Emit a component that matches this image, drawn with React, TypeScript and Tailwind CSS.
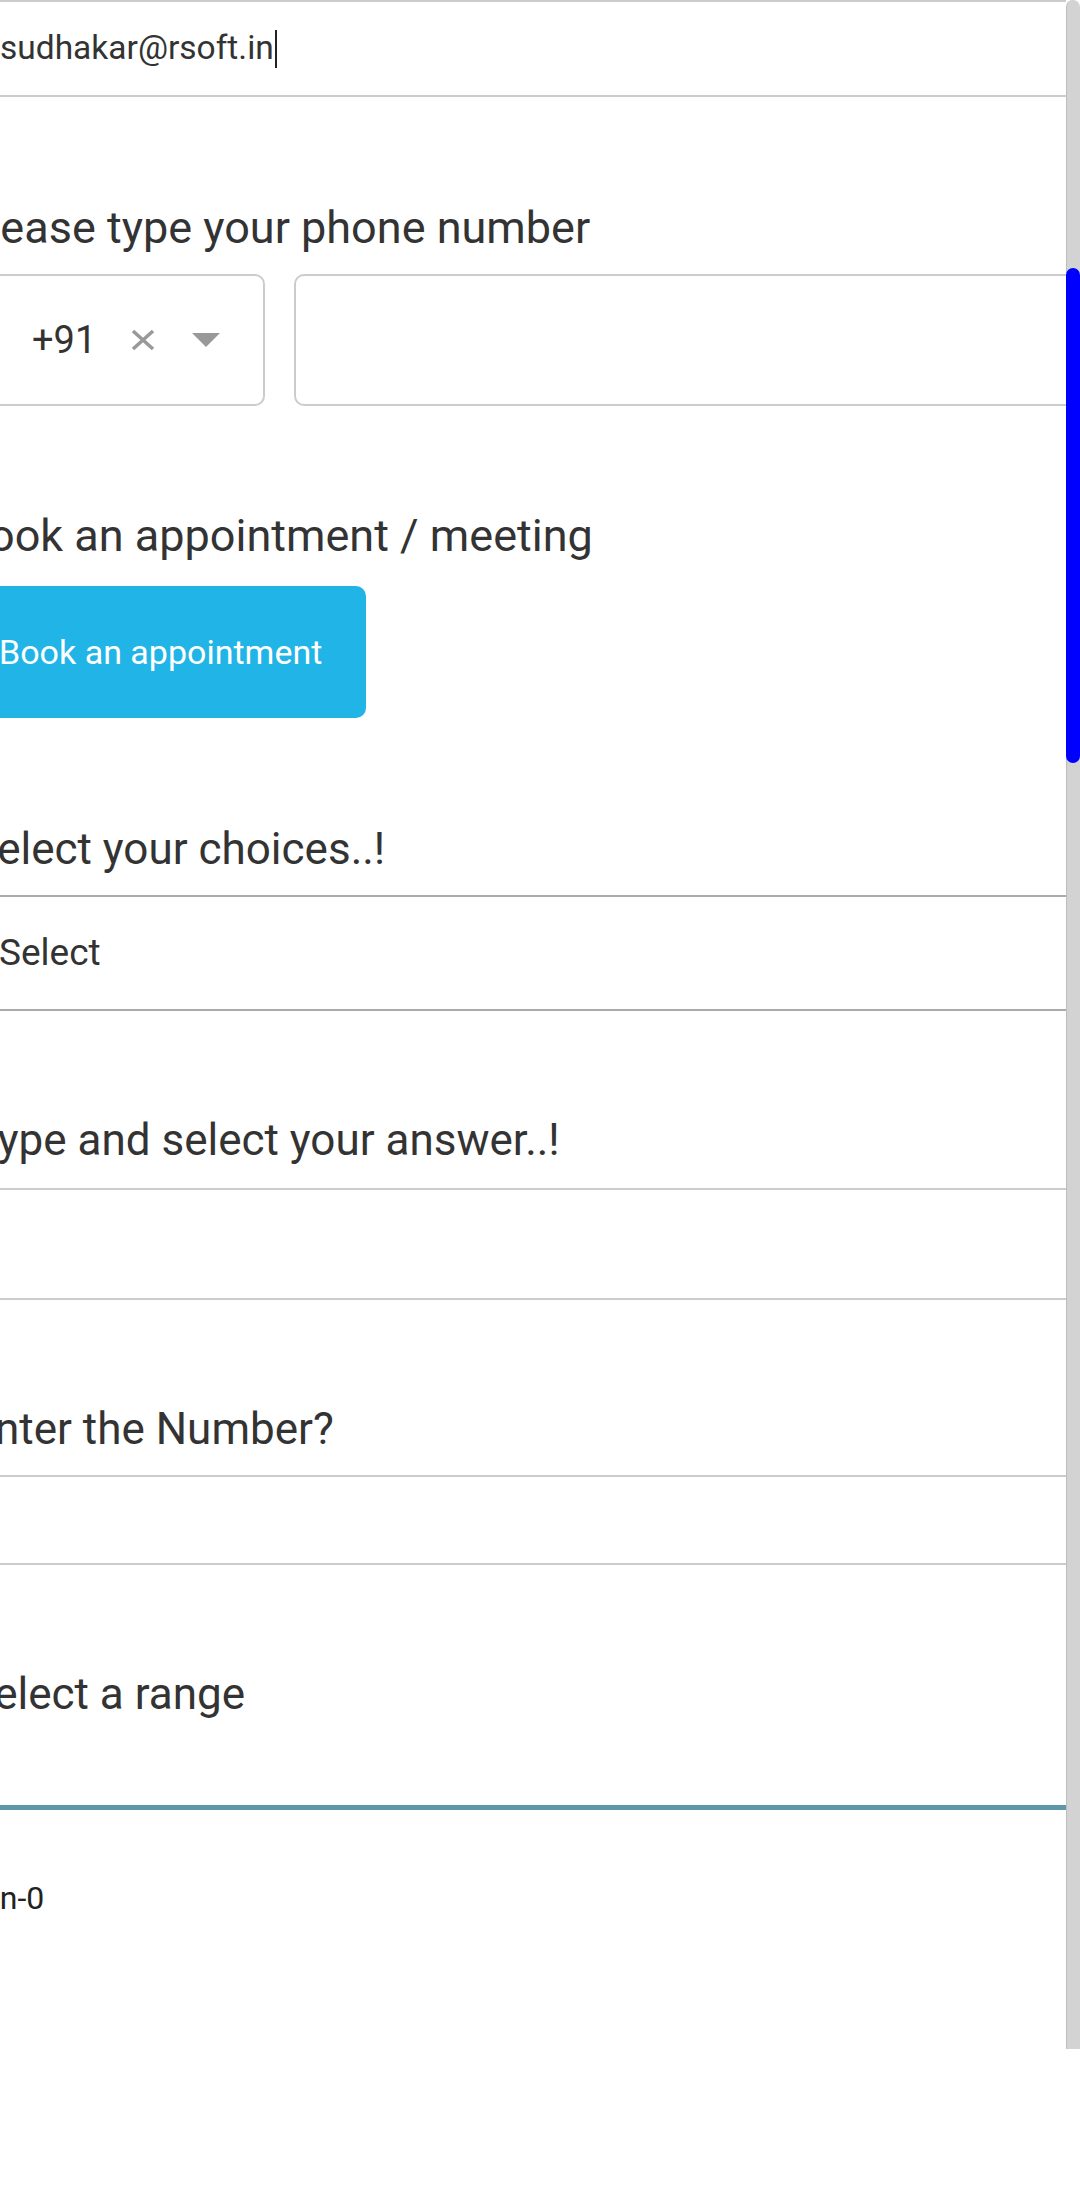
import React from 'react'

const font = { fontFamily: 'Roboto, "Noto Sans", Arial, sans-serif' }

const Label = ({ children, className = '' }: { children: React.ReactNode; className?: string }) => (
  <p className={`leading-[52px] text-[#333] whitespace-nowrap ${className}`}>{children}</p>
)

const App = () => {
  return (
    <div className="flex w-[1080px] min-h-[2208px] bg-white" style={font}>
      <div className="flex-1 overflow-hidden">
        {/* email */}
        <div className="h-[97px] border-y-2 border-[#cccccc] flex items-center">
          <span className="text-[33.5px] text-[#333] whitespace-nowrap">sudhakar@rsoft.in</span>
          <span className="inline-block w-[2px] h-[38px] bg-[#222] ml-[1px]" />
        </div>

        <Label className="mt-[105px] -ml-[39px] text-[45px]">Please type your phone number</Label>
        <div className="mt-[20px] flex gap-[29px] h-[132px]">
          <div className="-ml-[20px] w-[285px] shrink-0 border-2 border-[#cccccc] rounded-[10px] flex items-center pl-[50px]">
            <span className="text-[38px] text-[#333]">+91</span>
            <svg className="ml-[35px]" width="24" height="22" viewBox="0 0 24 22">
              <path d="M2 2 L22 20 M22 2 L2 20" stroke="#999" strokeWidth="3.5" />
            </svg>
            <svg className="ml-[37px]" width="28" height="14" viewBox="0 0 28 14">
              <polygon points="0,0 28,0 14,14" fill="#999" />
            </svg>
          </div>
          <div className="w-[900px] shrink-0 border-2 border-[#cccccc] rounded-[10px]" />
        </div>

        <Label className="mt-[104px] -ml-[39px] text-[45px]">Book an appointment / meeting</Label>
        <button className="mt-[24px] -ml-[45px] h-[132px] px-[44px] rounded-[10px] bg-[#21b4e7] text-white text-[34px] whitespace-nowrap">
          Book an appointment
        </button>

        <Label className="mt-[105px] -ml-[29px] text-[44px]">Select your choices..!</Label>
        <div className="mt-[20px] h-[116px] border-y-2 border-[#aaaaaa] flex items-center">
          <span className="text-[37px] text-[#333] -ml-[1px]">Select</span>
        </div>

        <Label className="mt-[103px] -ml-[27px] text-[44px]">Type and select your answer..!</Label>
        <div className="mt-[22px] h-[112px] border-y-2 border-[#cccccc]" />

        <Label className="mt-[103px] -ml-[30px] text-[44px]">Enter the Number?</Label>
        <div className="mt-[20px] h-[90px] border-y-2 border-[#cccccc]" />

        <Label className="mt-[103px] -ml-[32px] text-[44px]">Select a range</Label>
        <div className="mt-[85px] h-[5px] bg-[#5e97a8]" />
        <p className="mt-[68px] -ml-[36px] text-[32px] leading-[40px] text-[#222] whitespace-nowrap">Min-0</p>
      </div>

      {/* scrollbar */}
      <div className="w-[14px] shrink-0">
        <div className="h-[2049px] bg-[#d3d3d3] rounded-t-full border-l border-[#bdbdbd] pt-[268px]">
          <div className="h-[495px] bg-[#0000ff] rounded-full -ml-[1px]" />
        </div>
      </div>
    </div>
  )
}

export default App
